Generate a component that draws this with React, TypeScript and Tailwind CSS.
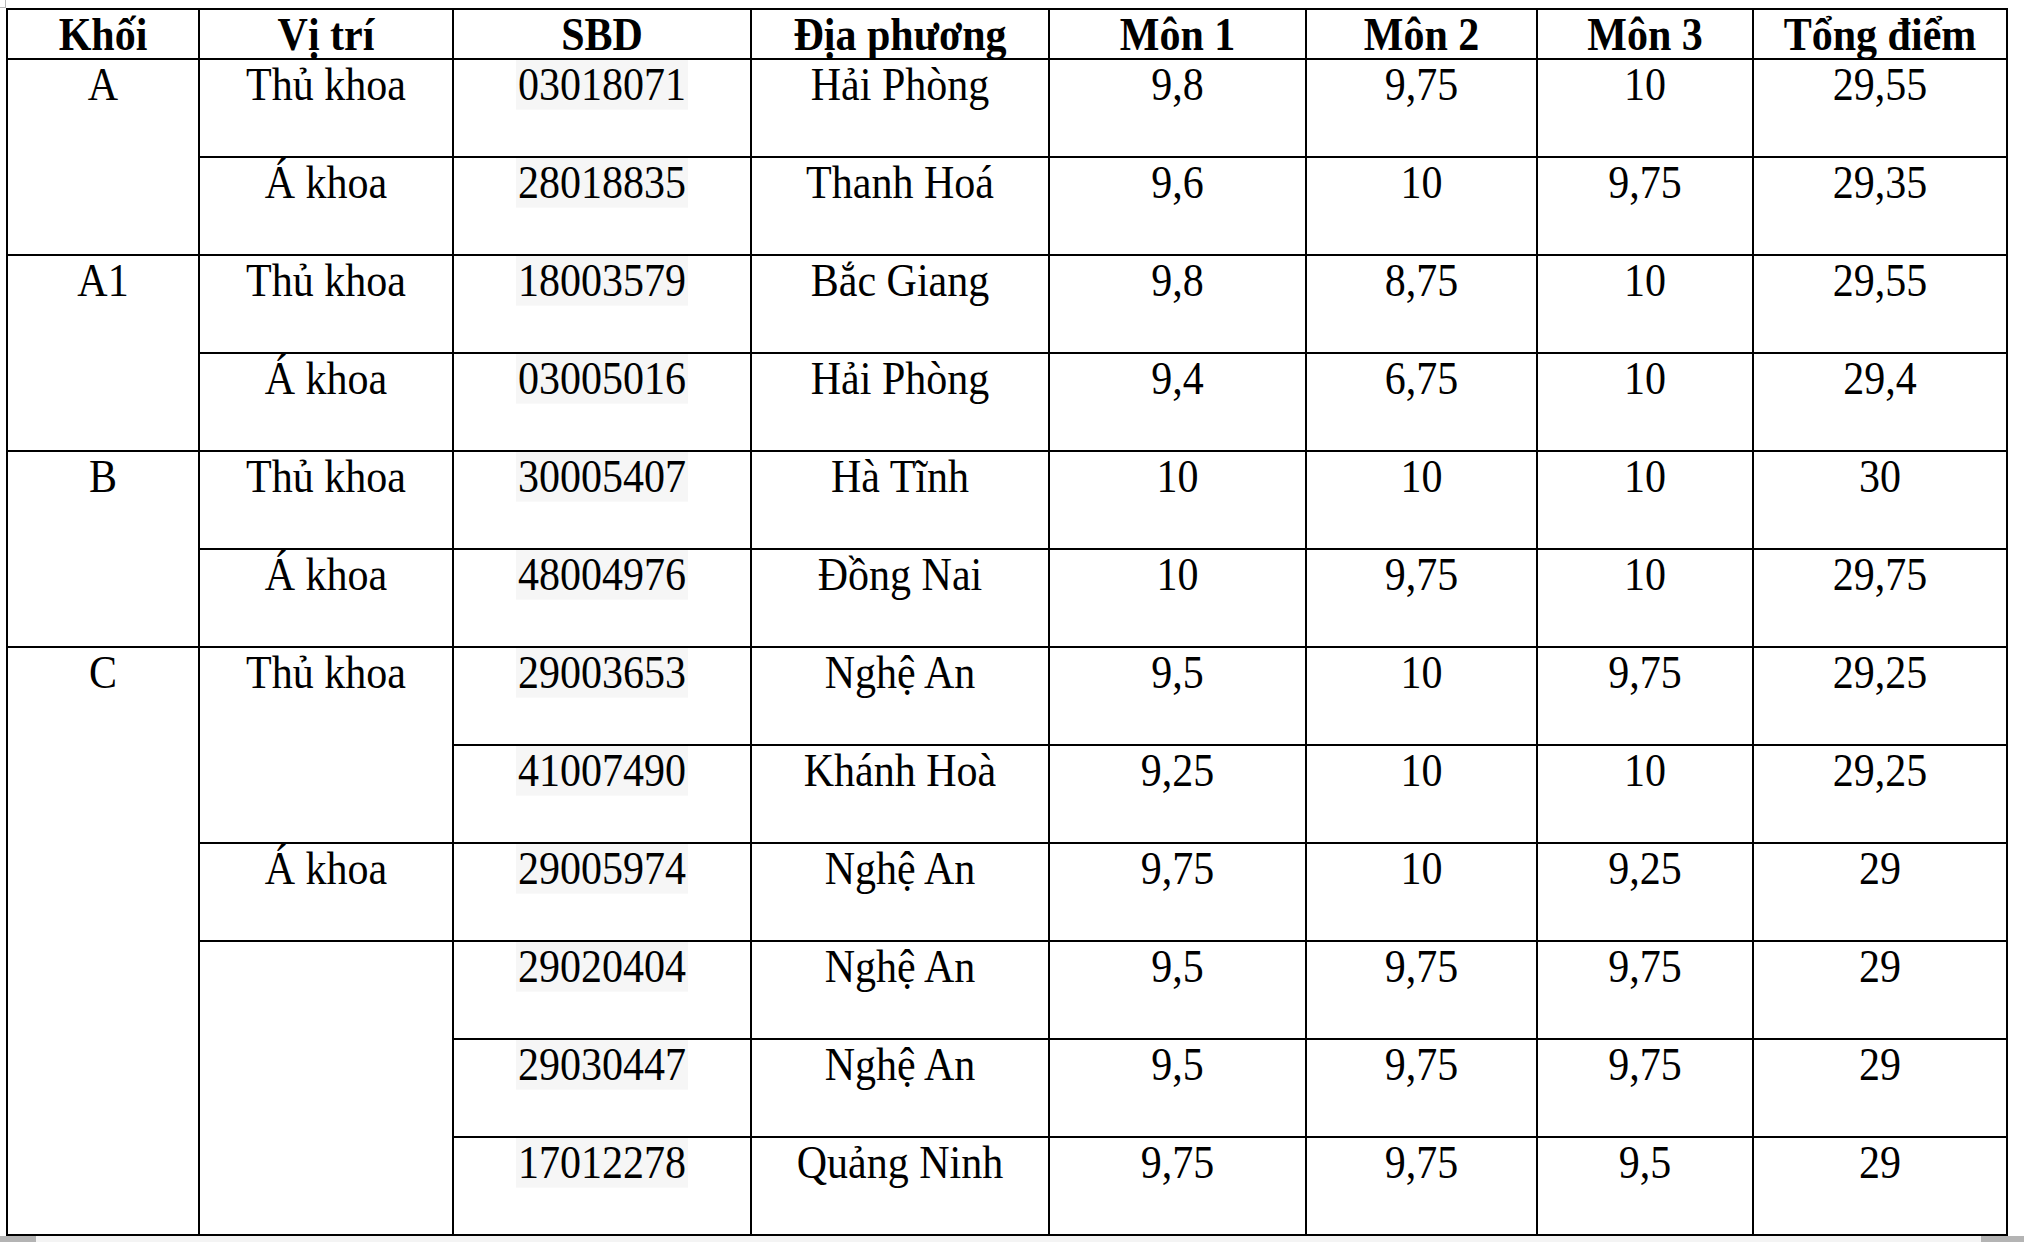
import React from "react";

type Row = {
  khoi?: { text: string; span: "rs2" | "rs6" } | null;
  vitri?: { text: string; span: "rs1" | "rs2" | "rs3" } | null;
  sbd: string;
  dp: string;
  m1: string;
  m2: string;
  m3: string;
  tong: string;
};

const rows: Row[] = [
  { khoi: { text: "A", span: "rs2" }, vitri: { text: "Thủ khoa", span: "rs1" }, sbd: "03018071", dp: "Hải Phòng", m1: "9,8", m2: "9,75", m3: "10", tong: "29,55" },
  { vitri: { text: "Á khoa", span: "rs1" }, sbd: "28018835", dp: "Thanh Hoá", m1: "9,6", m2: "10", m3: "9,75", tong: "29,35" },
  { khoi: { text: "A1", span: "rs2" }, vitri: { text: "Thủ khoa", span: "rs1" }, sbd: "18003579", dp: "Bắc Giang", m1: "9,8", m2: "8,75", m3: "10", tong: "29,55" },
  { vitri: { text: "Á khoa", span: "rs1" }, sbd: "03005016", dp: "Hải Phòng", m1: "9,4", m2: "6,75", m3: "10", tong: "29,4" },
  { khoi: { text: "B", span: "rs2" }, vitri: { text: "Thủ khoa", span: "rs1" }, sbd: "30005407", dp: "Hà Tĩnh", m1: "10", m2: "10", m3: "10", tong: "30" },
  { vitri: { text: "Á khoa", span: "rs1" }, sbd: "48004976", dp: "Đồng Nai", m1: "10", m2: "9,75", m3: "10", tong: "29,75" },
  { khoi: { text: "C", span: "rs6" }, vitri: { text: "Thủ khoa", span: "rs2" }, sbd: "29003653", dp: "Nghệ An", m1: "9,5", m2: "10", m3: "9,75", tong: "29,25" },
  { sbd: "41007490", dp: "Khánh Hoà", m1: "9,25", m2: "10", m3: "10", tong: "29,25" },
  { vitri: { text: "Á khoa", span: "rs1" }, sbd: "29005974", dp: "Nghệ An", m1: "9,75", m2: "10", m3: "9,25", tong: "29" },
  { vitri: { text: "", span: "rs3" }, sbd: "29020404", dp: "Nghệ An", m1: "9,5", m2: "9,75", m3: "9,75", tong: "29" },
  { sbd: "29030447", dp: "Nghệ An", m1: "9,5", m2: "9,75", m3: "9,75", tong: "29" },
  { sbd: "17012278", dp: "Quảng Ninh", m1: "9,75", m2: "9,75", m3: "9,5", tong: "29" },
];

const headers = ["Khối", "Vị trí", "SBD", "Địa phương", "Môn 1", "Môn 2", "Môn 3", "Tổng điểm"];

const spanClass: Record<string, string> = {
  rs1: "",
  rs2: "row-span-2",
  rs3: "row-span-3",
  rs6: "row-span-6",
};

function Cell({ children, className = "" }: { children?: React.ReactNode; className?: string }) {
  return (
    <div className={`bg-white text-center text-black text-[42px] leading-[47px] ${className}`}>
      <div className="origin-top scale-y-[1.08]">{children}</div>
    </div>
  );
}

export default function App() {
  return (
    <div
      className="relative w-[2024px] h-[1242px] bg-white overflow-hidden flex flex-col"
      style={{ fontFamily: '"Liberation Serif", "Times New Roman", serif' }}
    >
      <div className="absolute left-0 top-0 w-[6px] h-[8px] border-r border-b border-[#b8b8b8]" />
      <div className="pl-[6px] pt-[8px]">
        <div className="w-fit bg-black p-[2px] grid gap-[2px] grid-cols-[190px_252px_296px_296px_255px_229px_214px_252px] grid-rows-[48px_repeat(12,96px)]">
          {headers.map((h) => (
            <Cell key={h} className="font-bold leading-[47px]">
              {h}
            </Cell>
          ))}
          {rows.map((r, i) => (
            <React.Fragment key={i}>
              {r.khoi && <Cell className={spanClass[r.khoi.span]}>{r.khoi.text}</Cell>}
              {r.vitri && <Cell className={spanClass[r.vitri.span]}>{r.vitri.text}</Cell>}
              <Cell>
                <span className="bg-[#f6f6f6] px-[2px]">{r.sbd}</span>
              </Cell>
              <Cell>{r.dp}</Cell>
              <Cell>{r.m1}</Cell>
              <Cell>{r.m2}</Cell>
              <Cell>{r.m3}</Cell>
              <Cell>{r.tong}</Cell>
            </React.Fragment>
          ))}
        </div>
      </div>
      <div className="flex h-[6px] w-full">
        <div className="w-[36px] bg-[#b4b4b4]" />
        <div className="flex-1 bg-[#f4f4f4]" />
        <div className="w-[43px] bg-[#b4b4b4]" />
      </div>
    </div>
  );
}
